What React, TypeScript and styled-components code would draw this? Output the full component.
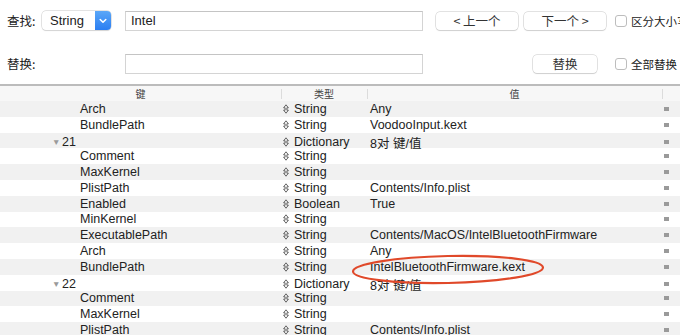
import React from "react";
import styled, { createGlobalStyle } from "styled-components";

const Global = createGlobalStyle`
  html, body { margin: 0; padding: 0; background: #fff; }
  body { font-family: "Liberation Sans", "Noto Sans CJK SC", sans-serif; color: #222; overflow: hidden; }
`;

const Page = styled.div`
  position: relative;
  width: 680px;
  height: 335px;
  overflow: hidden;
  background: #fff;
`;

const Toolbar = styled.div`
  height: 84px;
  box-sizing: border-box;
  padding: 10px 0 0 7px;
  display: flex;
  flex-direction: column;
  gap: 22px;
  background: #fff;
`;

const Row = styled.div`
  display: flex;
  align-items: center;
  height: 21px;
  white-space: nowrap;
  & > * { flex: none; }
`;

const Label = styled.div`
  width: 35px;
  font-size: 12.5px;
  color: #222;
  font-family: "Noto Sans CJK SC", sans-serif;
`;

const Spacer = styled.div<{ $w: number }>`
  width: ${(p) => p.$w}px;
`;

const Popup = styled.div`
  width: 69px;
  height: 19px;
  box-sizing: border-box;
  display: flex;
  border-radius: 4px;
  background: #fff;
  box-shadow: 0 0 0 0.5px #c8c8c8, 0 1px 1px rgba(0, 0, 0, 0.12);
  overflow: hidden;
`;

const PopupText = styled.div`
  flex: 1;
  font-size: 13px;
  padding-left: 8px;
  line-height: 19px;
  color: #222;
`;

const PopupArrow = styled.div`
  width: 16px;
  background: linear-gradient(#5aa7f8, #2b7ef2);
  display: flex;
  align-items: center;
  justify-content: center;
`;

const Field = styled.div<{ $ml: number }>`
  margin-left: ${(p) => p.$ml}px;
  width: 298px;
  height: 20px;
  box-sizing: border-box;
  border: 1px solid #d4d4d4;
  border-top-color: #c4c4c4;
  background: #fff;
  font-size: 13px;
  line-height: 18px;
  padding-left: 5px;
  color: #222;
`;

const Button = styled.div<{ $w: number; $ml: number }>`
  margin-left: ${(p) => p.$ml}px;
  width: ${(p) => p.$w}px;
  height: 18px;
  box-sizing: border-box;
  border-radius: 4px;
  background: #fff;
  box-shadow: 0 0 0 0.5px #c6c6c6, 0 1px 1px rgba(0, 0, 0, 0.14);
  display: flex;
  align-items: center;
  justify-content: center;
  font-size: 12.5px;
  font-family: "Noto Sans CJK SC", sans-serif;
  color: #333;
`;

const Check = styled.div<{ $ml: number }>`
  margin-left: ${(p) => p.$ml}px;
  width: 12px;
  height: 12px;
  box-sizing: border-box;
  border: 1px solid #bdbdbd;
  border-radius: 3px;
  background: #fff;
`;

const CheckLabel = styled.div`
  margin-left: 4px;
  font-size: 11.5px;
  font-family: "Noto Sans CJK SC", sans-serif;
  color: #222;
`;

const Table = styled.div`
  border-top: 2px solid #bcbcbc;
`;

const Cols = "281px 86px 295px 18px";

const Header = styled.div`
  display: grid;
  grid-template-columns: ${Cols};
  height: 15px;
  background: #f7f7f7;
  font-size: 10px;
  font-family: "Noto Sans CJK SC", sans-serif;
  color: #444;
`;

const HeadCell = styled.div<{ $div?: boolean }>`
  display: flex;
  align-items: center;
  justify-content: center;
  position: relative;
  &::before {
    content: "";
    display: ${(p) => (p.$div ? "block" : "none")};
    position: absolute;
    left: 0;
    top: 3px;
    bottom: 2px;
    width: 1px;
    background: #dcdcdc;
  }
`;

const DataRow = styled.div<{ $alt: boolean }>`
  display: grid;
  grid-template-columns: ${Cols};
  height: 15.8px;
  align-items: center;
  background: ${(p) => (p.$alt ? "#f1f1f1" : "#ffffff")};
  font-size: 12.5px;
  color: #222;
  white-space: nowrap;
`;

const KeyCell = styled.div<{ $group: boolean }>`
  padding-left: ${(p) => (p.$group ? 52 : 80)}px;
  display: flex;
  align-items: center;
`;

const Tri = styled.span`
  font-size: 8.5px;
  color: #9a9a9a;
  width: 10px;
  display: inline-block;
`;

const TypeCell = styled.div`
  display: flex;
  align-items: center;
  padding-left: 2px;
  gap: 5px;
`;

const ValueCell = styled.div`
  padding-left: 3px;
`;

const Mark = styled.div`
  width: 5px;
  height: 4px;
  background: #9a9a9a;
  margin-left: 2px;
`;

const Ellipse = styled.svg`
  position: absolute;
  left: 350px;
  top: 253px;
  width: 200px;
  height: 34px;
  overflow: visible;
`;

const Stepper = () => (
  <svg width="6" height="10" viewBox="0 0 6 10">
    <path d="M3 0.8 L5.4 3.8 H3.9 V6.2 H5.4 L3 9.2 L0.6 6.2 H2.1 V3.8 H0.6 Z" fill="none" stroke="#555" strokeWidth="0.9" strokeLinejoin="round" />
  </svg>
);

type R = { k: string; t: string; v: string; g?: boolean };
const rows: R[] = [
  { k: "Arch", t: "String", v: "Any" },
  { k: "BundlePath", t: "String", v: "VoodooInput.kext" },
  { k: "21", t: "Dictionary", v: "8对 键/值", g: true },
  { k: "Comment", t: "String", v: "" },
  { k: "MaxKernel", t: "String", v: "" },
  { k: "PlistPath", t: "String", v: "Contents/Info.plist" },
  { k: "Enabled", t: "Boolean", v: "True" },
  { k: "MinKernel", t: "String", v: "" },
  { k: "ExecutablePath", t: "String", v: "Contents/MacOS/IntelBluetoothFirmware" },
  { k: "Arch", t: "String", v: "Any" },
  { k: "BundlePath", t: "String", v: "IntelBluetoothFirmware.kext" },
  { k: "22", t: "Dictionary", v: "8对 键/值", g: true },
  { k: "Comment", t: "String", v: "" },
  { k: "MaxKernel", t: "String", v: "" },
  { k: "PlistPath", t: "String", v: "Contents/Info.plist" },
];

export default function App() {
  return (
    <Page>
      <Global />
      <Toolbar>
        <Row>
          <Label>查找:</Label>
          <Popup>
            <PopupText>String</PopupText>
            <PopupArrow>
              <svg width="8" height="6" viewBox="0 0 8 6">
                <path d="M1.2 1.5 L4 4.3 L6.8 1.5" fill="none" stroke="#fff" strokeWidth="1.5" strokeLinecap="round" strokeLinejoin="round" />
              </svg>
            </PopupArrow>
          </Popup>
          <Field $ml={14}>Intel</Field>
          <Button $w={82} $ml={13}>&lt; 上一个</Button>
          <Button $w={82} $ml={6}>下一个 &gt;</Button>
          <Check $ml={9} />
          <CheckLabel>区分大小写</CheckLabel>
        </Row>
        <Row>
          <Label>替换:</Label>
          <Spacer $w={69} />
          <Field $ml={14} />
          <Button $w={64} $ml={110}>替换</Button>
          <Check $ml={18} />
          <CheckLabel>全部替换</CheckLabel>
        </Row>
      </Toolbar>
      <Table>
        <Header>
          <HeadCell>键</HeadCell>
          <HeadCell $div>类型</HeadCell>
          <HeadCell $div>值</HeadCell>
          <HeadCell $div />
        </Header>
        {rows.map((r, i) => (
          <DataRow key={i} $alt={i % 2 === 0}>
            <KeyCell $group={!!r.g}>
              {r.g && <Tri>▼</Tri>}
              {r.k}
            </KeyCell>
            <TypeCell>
              <Stepper />
              {r.t}
            </TypeCell>
            <ValueCell>{r.v}</ValueCell>
            <Mark />
          </DataRow>
        ))}
      </Table>
      <Ellipse viewBox="0 0 200 34">
        <ellipse cx="98" cy="16.5" rx="95" ry="13.5" fill="none" stroke="#e0492a" strokeWidth="2.2" transform="rotate(-1.2 98 16.5)" />
      </Ellipse>
    </Page>
  );
}
